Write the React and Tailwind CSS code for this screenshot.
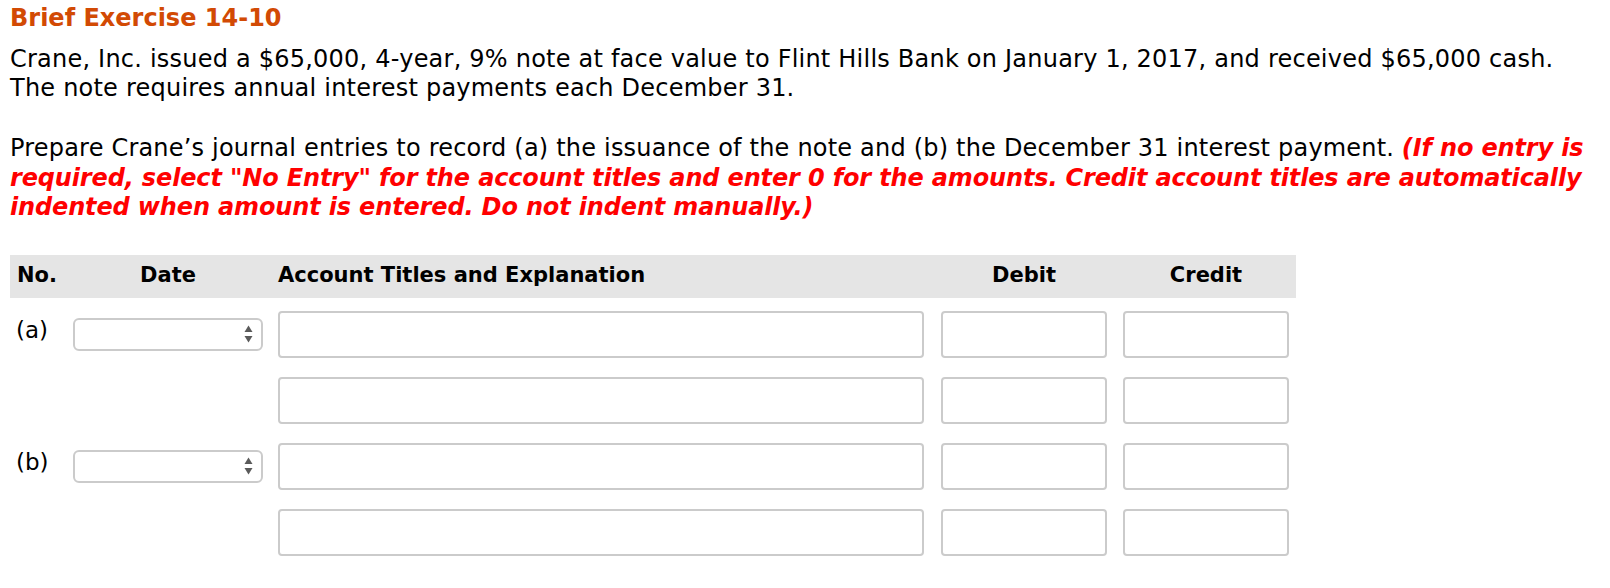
import React from 'react';

const font = { fontFamily: '"DejaVu Sans", Verdana, sans-serif' };

function SelectBox() {
  return (
    <div className="mt-[7px] flex h-[33px] w-[190px] items-center justify-end rounded-[6px] border-2 border-[#cbcbcb] bg-white pr-[8px]">
      <svg width="9" height="18" viewBox="0 0 9 18">
        <path d="M4.5 0.5 L8.5 7 L0.5 7 Z" fill="#5a5a5a" />
        <path d="M0.5 11 L8.5 11 L4.5 17.5 Z" fill="#5a5a5a" />
      </svg>
    </div>
  );
}

function Box({ w }) {
  return <div className={`h-[47px] ${w} rounded-[4px] border-2 border-[#cbcbcb] bg-white`} />;
}

function EntryRow({ label, first }) {
  return (
    <div className="flex items-start">
      <div className="w-[63px] pl-[6px] pt-[5px] text-[23px] leading-[29px] text-black">{label}</div>
      <div className="w-[190px]">{first && <SelectBox />}</div>
      <div className="ml-[15px]"><Box w="w-[646px]" /></div>
      <div className="ml-[17px]"><Box w="w-[166px]" /></div>
      <div className="ml-[16px]"><Box w="w-[166px]" /></div>
    </div>
  );
}

export default function App() {
  return (
    <div className="min-h-[588px] w-[1610px] bg-white pl-[10px] pt-[4px] text-black" style={font}>
      <h1 className="text-[24px] font-bold leading-[29px] text-[#d24a04]">Brief Exercise 14-10</h1>

      <p className="mt-[12px] whitespace-nowrap text-[24px] leading-[29px] tracking-[0.22px]">
        Crane, Inc. issued a $65,000, 4-year, 9% note at face value to Flint Hills Bank on January 1, 2017, and received $65,000 cash.
        <br />
        The note requires annual interest payments each December 31.
      </p>

      <p className="mt-[31px] whitespace-nowrap text-[24px] leading-[29.5px]">
        <span className="tracking-[0.2px]">
          Prepare Crane’s journal entries to record (a) the issuance of the note and (b) the December 31 interest payment.
        </span>{' '}
        <span className="font-bold italic tracking-[-0.15px] text-[#ff0000]">(If no entry is</span>
        <br />
        <span className="font-bold italic tracking-[-0.15px] text-[#ff0000]">
          required, select "No Entry" for the account titles and enter 0 for the amounts. Credit account titles are automatically
        </span>
        <br />
        <span className="font-bold italic tracking-[-0.15px] text-[#ff0000]">indented when amount is entered. Do not indent manually.)</span>
      </p>

      <div className="mt-[32px] w-[1286px]">
        <div className="flex h-[43px] items-center bg-[#e5e5e5] text-[21px] font-bold">
          <div className="w-[63px] pl-[7px]">No.</div>
          <div className="w-[190px] text-center">Date</div>
          <div className="ml-[15px] w-[646px]">Account Titles and Explanation</div>
          <div className="ml-[17px] w-[166px] text-center">Debit</div>
          <div className="ml-[16px] w-[166px] text-center">Credit</div>
        </div>

        <div className="mt-[13px] flex flex-col gap-[19px]">
          <EntryRow label="(a)" first />
          <EntryRow label="" />
          <EntryRow label="(b)" first />
          <EntryRow label="" />
        </div>
      </div>
    </div>
  );
}
